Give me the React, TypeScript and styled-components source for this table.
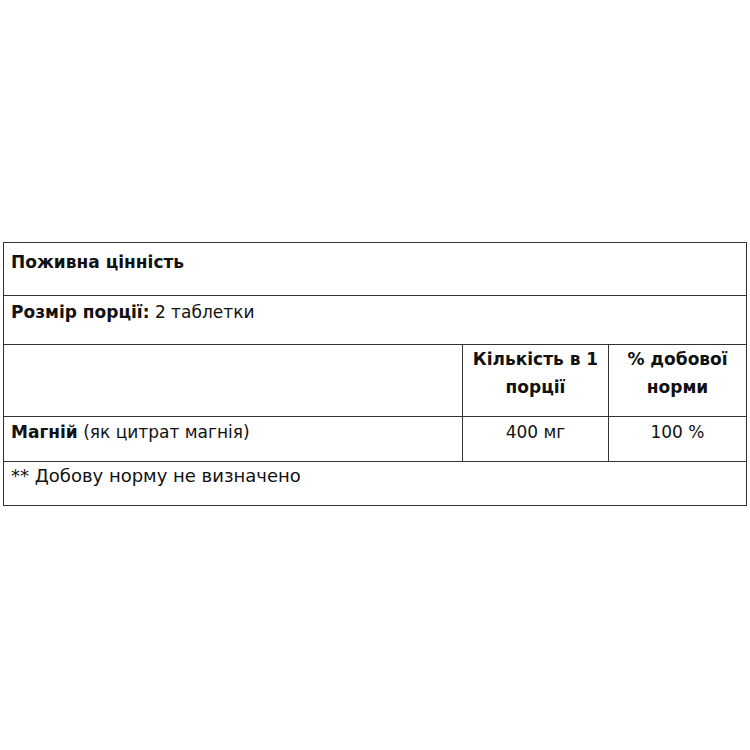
import React from "react";
import styled, { createGlobalStyle } from "styled-components";

const GlobalStyle = createGlobalStyle`
  html, body {
    margin: 0;
    padding: 0;
    background: #fff;
  }
  body {
    font-family: "DejaVu Sans", "Noto Sans", sans-serif;
    color: #111;
  }
`;

const Page = styled.div`
  padding: 242px 3px 0 3px;
`;

const Table = styled.table`
  width: 744px;
  border-collapse: collapse;
  border: 1.5px solid #333;
  font-size: 17px;
  line-height: 28px;
`;

const Row = styled.tr<{ $h: number }>`
  height: ${(p) => p.$h}px;
`;

const Cell = styled.td<{ $center?: boolean; $top?: number; $size?: number }>`
  border: 1.5px solid #333;
  padding: ${(p) => p.$top ?? 4}px 7px 0 7px;
  vertical-align: top;
  text-align: ${(p) => (p.$center ? "center" : "left")};
  font-size: ${(p) => p.$size ?? 17}px;
`;

const B = styled.b`
  font-weight: 700;
`;

export default function App() {
  return (
    <Page>
      <GlobalStyle />
      <Table>
        <tbody>
          <Row $h={53}>
            <Cell colSpan={3} $top={5}>
              <B>Поживна цінність</B>
            </Cell>
          </Row>
          <Row $h={49}>
            <Cell colSpan={3} $top={2}>
              <B>Розмір порції:</B> 2 таблетки
            </Cell>
          </Row>
          <Row $h={72}>
            <Cell style={{ width: 444 }} />
            <Cell $center $top={0} style={{ width: 131 }}>
              <B>Кількість в 1 порції</B>
            </Cell>
            <Cell $center $top={0}>
              <B>% добової норми</B>
            </Cell>
          </Row>
          <Row $h={45}>
            <Cell $top={1}>
              <B>Магній</B> (як цитрат магнія)
            </Cell>
            <Cell $center $top={1}>400 мг</Cell>
            <Cell $center $top={1}>100 %</Cell>
          </Row>
          <Row $h={44}>
            <Cell colSpan={3} $top={0} $size={18}>
              ** Добову норму не визначено
            </Cell>
          </Row>
        </tbody>
      </Table>
    </Page>
  );
}
